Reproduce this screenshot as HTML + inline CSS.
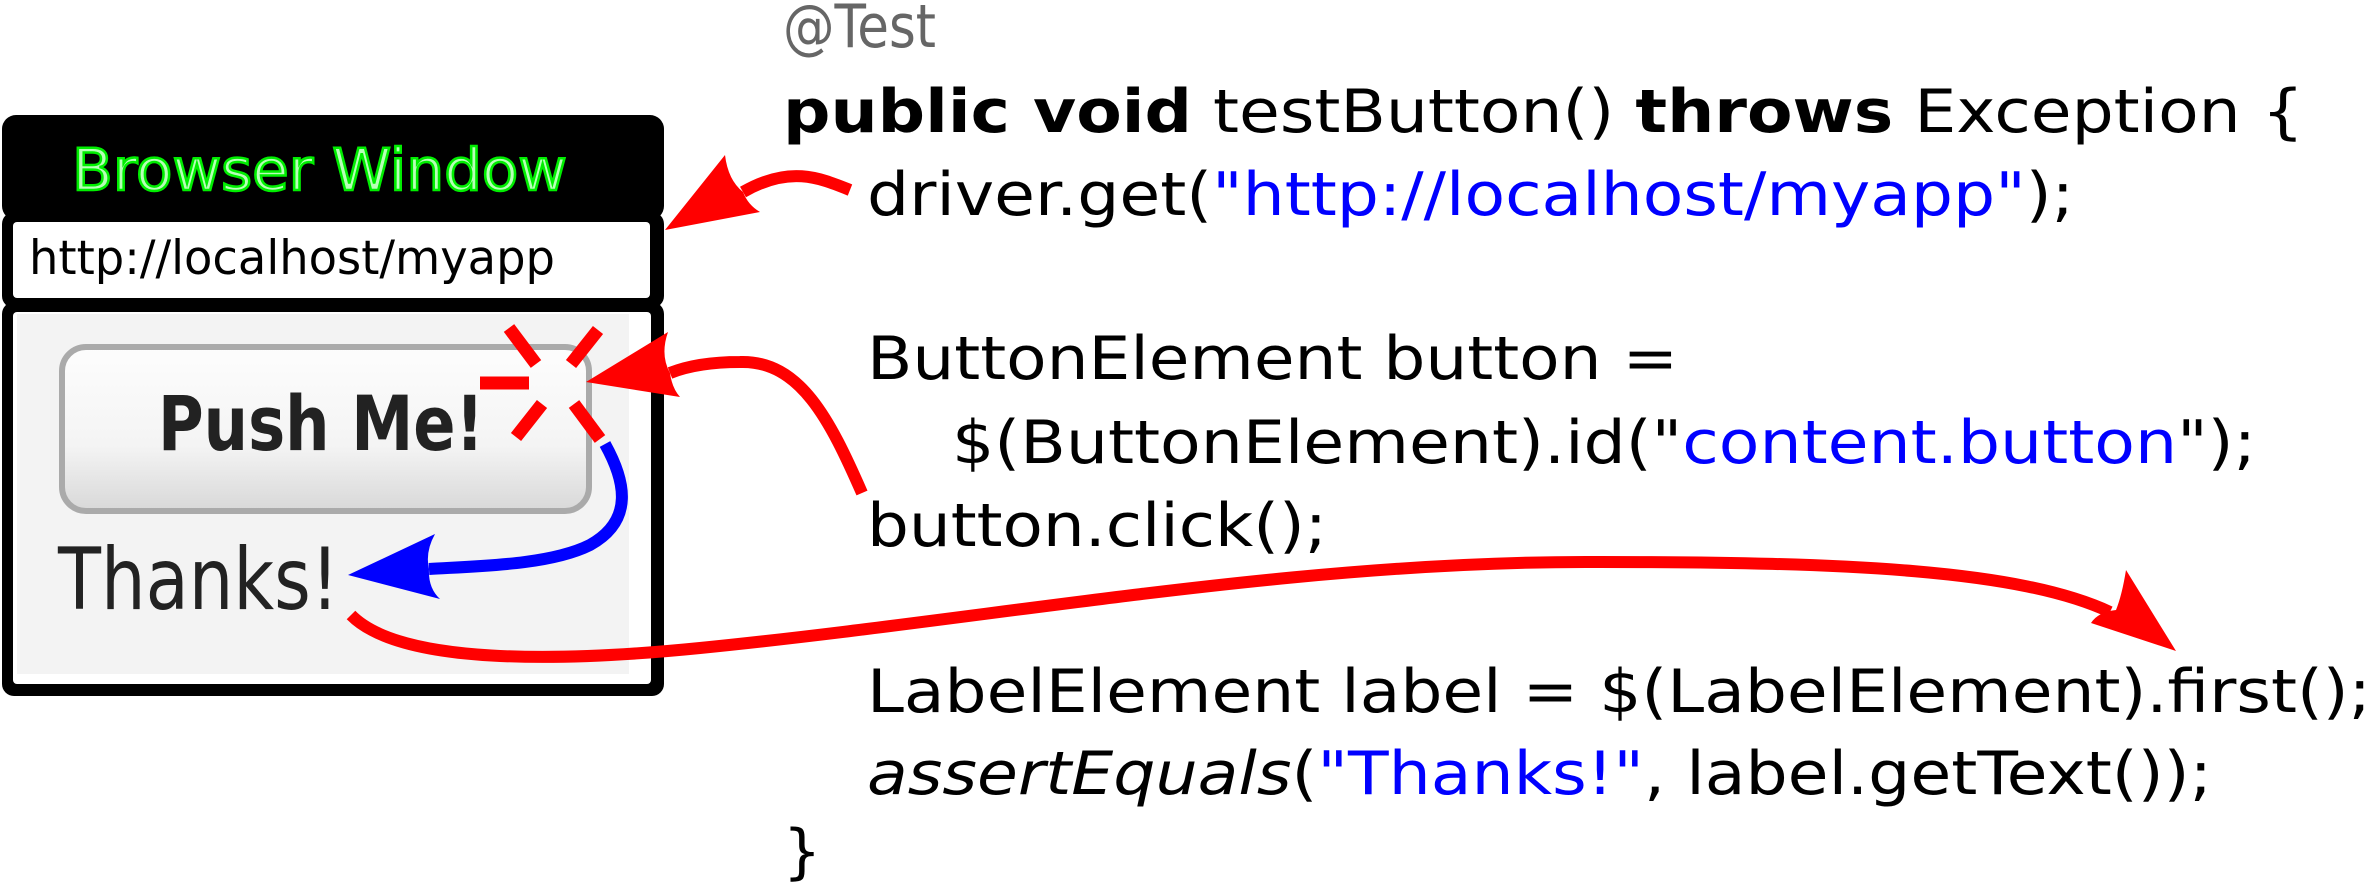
<!DOCTYPE html>
<html><head><meta charset="utf-8"><style>html,body{margin:0;padding:0;background:#fff;}svg{display:block}</style></head>
<body>
<svg width="2371" height="893" viewBox="0 0 2371 893" xmlns="http://www.w3.org/2000/svg">
<defs>
<linearGradient id="bg" x1="0" y1="0" x2="0" y2="1">
<stop offset="0" stop-color="#fdfdfd"/><stop offset="0.6" stop-color="#f4f4f4"/><stop offset="1" stop-color="#d8d8d8"/>
</linearGradient>
</defs>
<!-- browser window -->
<rect x="2" y="115" width="662" height="105" rx="14" fill="#000"/>
<rect x="2" y="212" width="662" height="96" rx="12" fill="#000"/>
<rect x="13" y="222" width="637" height="76" rx="4" fill="#fff"/>
<rect x="2" y="302" width="662" height="394" rx="12" fill="#000"/>
<rect x="13" y="312" width="638" height="372" rx="4" fill="#fff"/>
<rect x="17" y="314" width="612" height="360" fill="#f3f3f3"/>
<text x="72" y="190" font-family="DejaVu Sans, Liberation Sans, sans-serif" font-size="58" fill="#b8ffb8" stroke="#00ee00" stroke-width="2.5" textLength="495" lengthAdjust="spacingAndGlyphs">Browser Window</text>
<text x="29" y="274" font-family="DejaVu Sans, Liberation Sans, sans-serif" font-size="47" fill="#000" textLength="526" lengthAdjust="spacingAndGlyphs">http://localhost/myapp</text>
<!-- button -->
<rect x="62" y="347" width="527" height="164" rx="24" fill="url(#bg)" stroke="#aaa" stroke-width="6"/>
<text x="158" y="450" font-family="DejaVu Sans, Liberation Sans, sans-serif" font-weight="bold" font-size="76" fill="#222" textLength="326" lengthAdjust="spacingAndGlyphs">Push Me!</text>
<text x="58" y="609" font-family="DejaVu Sans, Liberation Sans, sans-serif" font-size="86" fill="#222" textLength="281" lengthAdjust="spacingAndGlyphs">Thanks!</text>
<!-- burst -->
<g stroke="#f00" stroke-width="13" fill="none">
<line x1="509" y1="328" x2="536" y2="364"/>
<line x1="598" y1="330" x2="571" y2="364"/>
<line x1="480" y1="383" x2="529" y2="383"/>
<line x1="516" y1="437" x2="542" y2="404"/>
<line x1="574" y1="404" x2="600" y2="439"/>
</g>
<!-- blue arrow -->
<path d="M605,444 C625,480 635,520 590,545 C550,565 480,566 429,569" stroke="#00f" stroke-width="12" fill="none"/>
<path d="M348,575 L435,534 Q425,552 429,569 Q428,588 440,599 Z" fill="#00f"/>
<!-- red arrow 1 -->
<path d="M850,190 C820,178 790,165 743,192" stroke="#f00" stroke-width="12" fill="none"/>
<path d="M665,230 L725,155 Q728,180 743,192 Q748,205 760,212 Z" fill="#f00"/>
<!-- red arrow 2 -->
<path d="M862,493 C830,420 800,360 740,362 C715,362 690,365 670,373" stroke="#f00" stroke-width="12" fill="none"/>
<path d="M586,382 L668,332 Q660,355 670,373 Q672,388 680,397 Z" fill="#f00"/>
<!-- red long arrow -->
<path d="M351,615 C400,665 560,662 700,648 C1000,618 1300,560 1600,562 C1850,562 2020,570 2110,612" stroke="#f00" stroke-width="12" fill="none"/>
<path d="M2176,651 L2126,570 Q2122,595 2116,610 Q2098,612 2091,623 Z" fill="#f00"/>
<!-- code -->
<g font-family="DejaVu Sans, Liberation Sans, sans-serif" font-size="60" fill="#000" lengthAdjust="spacingAndGlyphs">
<text x="783" y="47" fill="#666" textLength="153" lengthAdjust="spacingAndGlyphs">@Test</text>
<text x="783" y="132" textLength="1521" lengthAdjust="spacingAndGlyphs"><tspan font-weight="bold">public void</tspan> testButton() <tspan font-weight="bold">throws</tspan> Exception {</text>
<text x="867" y="215" textLength="1207" lengthAdjust="spacingAndGlyphs">driver.get(<tspan fill="#00f">"http://localhost/myapp"</tspan>);</text>
<text x="867" y="379" textLength="811" lengthAdjust="spacingAndGlyphs">ButtonElement button =</text>
<text x="952" y="463" textLength="1304" lengthAdjust="spacingAndGlyphs">$(ButtonElement).id("<tspan fill="#00f">content.button</tspan>");</text>
<text x="867" y="546" textLength="460" lengthAdjust="spacingAndGlyphs">button.click();</text>
<text x="867" y="712" textLength="1504" lengthAdjust="spacingAndGlyphs">LabelElement label = $(LabelElement).first();</text>
<text x="867" y="794" textLength="1345" lengthAdjust="spacingAndGlyphs"><tspan font-style="italic">assertEquals</tspan>(<tspan fill="#00f">"Thanks!"</tspan>, label.getText());</text>
<text x="783" y="872">}</text>
</g>
</svg>
</body></html>
